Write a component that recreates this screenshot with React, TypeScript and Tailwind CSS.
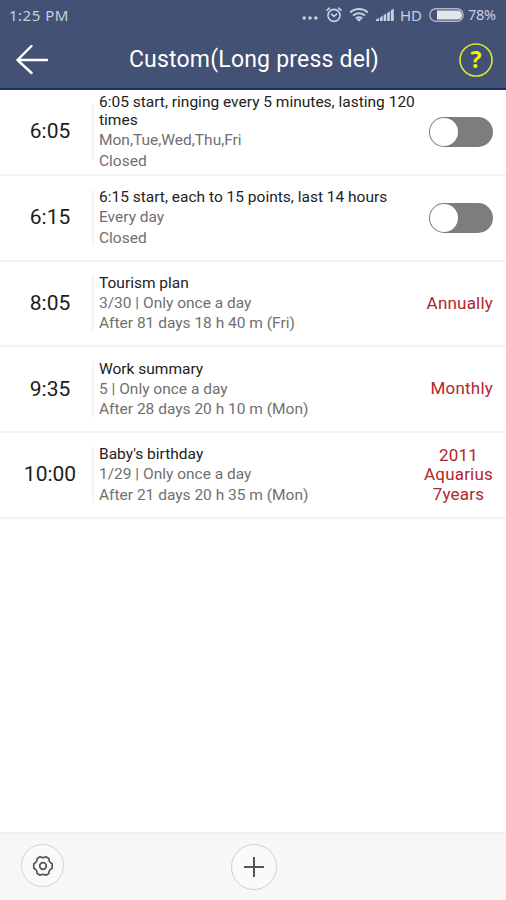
import React from 'react';

interface Reminder {
  time: string;
  title: string;
  schedule: string;
  status: string;
  toggle?: boolean;
  repeat?: string[];
}

const reminders: Reminder[] = [
  {
    time: '6:05',
    title: '6:05 start, ringing every 5 minutes, lasting 120 times',
    schedule: 'Mon,Tue,Wed,Thu,Fri',
    status: 'Closed',
    toggle: true,
  },
  {
    time: '6:15',
    title: '6:15 start, each to 15 points, last 14 hours',
    schedule: 'Every day',
    status: 'Closed',
    toggle: true,
  },
  {
    time: '8:05',
    title: 'Tourism plan',
    schedule: '3/30 | Only once a day',
    status: 'After 81 days 18 h 40 m (Fri)',
    repeat: ['Annually'],
  },
  {
    time: '9:35',
    title: 'Work summary',
    schedule: '5 | Only once a day',
    status: 'After 28 days 20 h 10 m (Mon)',
    repeat: ['Monthly'],
  },
  {
    time: '10:00',
    title: "Baby's birthday",
    schedule: '1/29 | Only once a day',
    status: 'After 21 days 20 h 35 m (Mon)',
    repeat: ['2011', 'Aquarius', '7years'],
  },
];

function StatusBar() {
  return (
    <div className="flex h-[30px] items-center justify-between pl-[9px] pr-[8px] font-['Noto_Sans',sans-serif] text-[15px] text-[#c9d0df]">
      <span className="tracking-[0.5px]">1:25 PM</span>
      <div className="flex items-center">
        <svg width="17" height="16" viewBox="0 0 17 16" fill="currentColor">
          <circle cx="2.2" cy="11" r="1.8" />
          <circle cx="8" cy="11" r="1.8" />
          <circle cx="13.8" cy="11" r="1.8" />
        </svg>
        <svg className="ml-[7px]" width="16" height="16" viewBox="0 0 16 16" fill="none" stroke="currentColor" strokeWidth="1.6" strokeLinecap="round" strokeLinejoin="round">
          <circle cx="8" cy="8.4" r="6" />
          <path d="M1 3.2 3.4 1.2M15 3.2 12.6 1.2M5.4 7.2 8 9.4l2.8-2.4" />
        </svg>
        <svg className="ml-[7px]" width="20" height="16" viewBox="0 0 20 16" fill="none" stroke="currentColor" strokeWidth="2">
          <path d="M1.2 5.4a13 13 0 0 1 17.6 0M4 8.5a8.8 8.8 0 0 1 12 0M6.8 11.4a4.8 4.8 0 0 1 6.4 0" />
          <path d="M7.6 12.2a3.6 3.6 0 0 1 4.8 0L10 14.8Z" fill="currentColor" stroke="none" />
        </svg>
        <svg className="ml-[7px]" width="18" height="16" viewBox="0 0 18 16" fill="currentColor">
          <path d="M0 14v-1.4L3 11v3zM4 14v-3.6L6.6 8.8V14zM7.6 14V8.2l2.6-1.7V14zM11.2 14V5.9l2.6-1.7V14zM14.8 14V3.5L17.8 1.6V14z" />
        </svg>
        <span className="ml-[6px] w-[23px] whitespace-nowrap">HD</span>
        <svg className="ml-[6px]" width="35" height="14" viewBox="0 0 35 14">
          <rect x="0.8" y="0.8" width="33.4" height="12.4" rx="6.2" fill="none" stroke="#aeb7c9" strokeWidth="1.4" />
          <path d="M8 2.4h20.5a4.6 4.6 0 0 1 0 9.2H8z" fill="#e4e6ea" />
        </svg>
        <span className="ml-[4px] w-[30px] whitespace-nowrap text-[14.5px] tracking-[-0.3px]">78%</span>
      </div>
    </div>
  );
}

function Header() {
  return (
    <header className="h-[90px] border-b-2 border-[#1b2f66] bg-[#425174]">
      <StatusBar />
      <div className="flex h-[60px] items-center justify-between pl-[16px] pr-[13px] text-white">
        <button aria-label="Back">
          <svg width="33" height="30" viewBox="0 0 33 30" fill="none" stroke="currentColor" strokeWidth="2.4" strokeLinecap="round" strokeLinejoin="round">
            <path d="M31 15H1.5M15.5 1 1.5 15l14 13" />
          </svg>
        </button>
        <h1 className="whitespace-nowrap text-[23px] tracking-[0.2px]">Custom(Long press del)</h1>
        <button aria-label="Help">
          <svg width="34" height="34" viewBox="0 0 34 34" fill="none">
            <circle cx="17" cy="17" r="16" stroke="#d6e23a" strokeWidth="1.7" />
            <text x="17" y="25" textAnchor="middle" fill="#f5f500" fontSize="23" fontWeight="700" fontFamily="Open Sans, sans-serif">?</text>
          </svg>
        </button>
      </div>
    </header>
  );
}

function Toggle() {
  return (
    <button role="switch" aria-checked="false" className="flex h-[30px] w-[64px] items-center rounded-full bg-[#7d7d7d] p-px">
      <span className="size-[28px] rounded-full bg-white" />
    </button>
  );
}

function ReminderRow({ item }: { item: Reminder }) {
  return (
    <li className="flex h-[85.8px] items-center border-b-2 border-[#f3f3f3] pr-[13px]">
      <div className="w-[92px] shrink-0 pl-[8px] text-center text-[21px] text-[#1c1c1c]">{item.time}</div>
      <div className="h-[56px] w-[2px] shrink-0 bg-[#f4f4f4]" />
      <div className="w-[325px] shrink-0 pl-[5px] text-[15.5px] leading-[20.6px] text-[#707070]">
        <p className="py-[1px] leading-[18px] text-[#222]">{item.title}</p>
        <p>{item.schedule}</p>
        <p>{item.status}</p>
      </div>
      <div className="flex flex-1 justify-end">
        {item.toggle && <Toggle />}
        {item.repeat && (
          <div className="text-center text-[17px] leading-[19.6px] tracking-[0.2px] text-[#b3262b]">
            {item.repeat.map((line) => (
              <p key={line}>{line}</p>
            ))}
          </div>
        )}
      </div>
    </li>
  );
}

function BottomBar() {
  return (
    <footer className="flex h-[68px] items-start border-t-2 border-[#f0f0f0] bg-[#f7f7f7] pl-[21px] pt-[10px] text-[#555]">
      <button aria-label="Settings" className="flex size-[43px] items-center justify-center rounded-full border border-[#d2d2d2] bg-[#fafafa]">
        <svg width="22" height="22" viewBox="0 0 22 22" fill="none" stroke="currentColor" strokeWidth="1.7" strokeLinejoin="round">
          <path d="M8 1.8q3 1.8 6 0l2.8 1.7q0 3.6 3.4 5.2v4.6q-3.4 1.6-3.4 5.2L14 20.200q-3-1.800-6 0L5.200 18.500q0-3.600-3.400-5.200V8.700q3.400-1.600 3.400-5.200Z" />
          <circle cx="11" cy="11" r="3.3" />
        </svg>
      </button>
      <button aria-label="Add" className="ml-[167px] flex size-[46px] items-center justify-center rounded-full border border-[#cfcfcf] bg-[#fafafa]">
        <svg width="20" height="20" viewBox="0 0 20 20" stroke="currentColor" strokeWidth="2">
          <path d="M10 0v20M0 10h20" />
        </svg>
      </button>
    </footer>
  );
}

export default function App() {
  return (
    <div className="flex h-screen w-full flex-col overflow-hidden bg-white font-[Roboto,sans-serif]">
      <Header />
      <ul className="flex-1">
        {reminders.map((item) => (
          <ReminderRow key={item.time} item={item} />
        ))}
      </ul>
      <BottomBar />
    </div>
  );
}
